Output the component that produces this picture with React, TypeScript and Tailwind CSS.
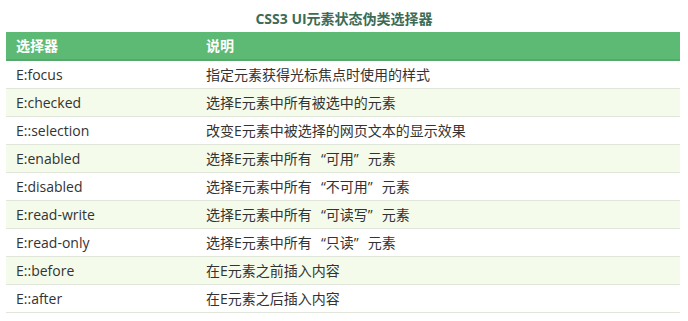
import React from 'react';

const rows: [string, string][] = [
  ['E:focus', '指定元素获得光标焦点时使用的样式'],
  ['E:checked', '选择E元素中所有被选中的元素'],
  ['E::selection', '改变E元素中被选择的网页文本的显示效果'],
  ['E:enabled', '选择E元素中所有“可用”元素'],
  ['E:disabled', '选择E元素中所有“不可用”元素'],
  ['E:read-write', '选择E元素中所有“可读写”元素'],
  ['E:read-only', '选择E元素中所有“只读”元素'],
  ['E::before', '在E元素之前插入内容'],
  ['E::after', '在E元素之后插入内容'],
];

// full-width quotes, the way the CJK system font draws them
function Desc({ text }: { text: string }) {
  const parts = text.split(/([“”])/);
  return (
    <>
      {parts.map((p, i) =>
        p === '“' ? (
          <span key={i} className="inline-block w-[14px] text-right">“</span>
        ) : p === '”' ? (
          <span key={i} className="inline-block w-[14px] text-left">”</span>
        ) : (
          p
        )
      )}
    </>
  );
}

export default function App() {
  return (
    <div
      className="w-[688px] h-[321px] bg-white px-[6px] pt-[4px]"
      style={{ fontFamily: '"Open Sans", "Noto Sans CJK SC", sans-serif' }}
    >
      <div className="h-[28px] flex items-center justify-center text-[14px] font-bold text-[#3d6b55]">
        CSS3 UI元素状态伪类选择器
      </div>
      <table className="w-[674px] border-collapse text-[14px] text-[#333]">
        <thead>
          <tr className="h-[28px] bg-[#5dba74] text-white border-b-2 border-[#57a86c]">
            <th className="w-[200px] pl-[10px] text-left font-bold">选择器</th>
            <th className="text-left font-bold">说明</th>
          </tr>
        </thead>
        <tbody>
          {rows.map(([sel, desc], i) => (
            <tr
              key={sel}
              className={`h-[28px] border-b border-[#e1e6da] ${i % 2 === 1 ? 'bg-[#f5fbea]' : 'bg-white'}`}
            >
              <td className="pl-[10px]">{sel}</td>
              <td>
                <Desc text={desc} />
              </td>
            </tr>
          ))}
        </tbody>
      </table>
    </div>
  );
}
